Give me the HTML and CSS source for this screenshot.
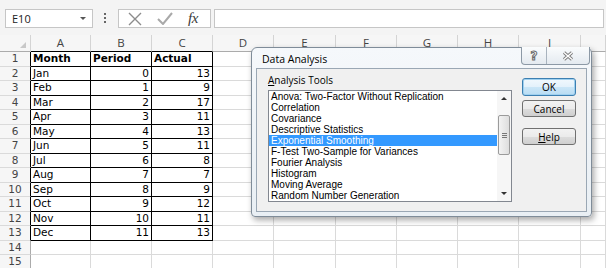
FILE: index.html
```html
<!DOCTYPE html>
<html lang="en">
<head>
    <meta charset="UTF-8">
    <title>Data Analysis</title>
    <link rel="stylesheet" href="styles.css">
</head>
<body>
    <div class="formula-bar">
        <div class="name-box"><span>E10</span><span class="drop"></span></div>
        <div class="dots"><i></i><i></i><i></i></div>
        <div class="fx-box">
            <svg class="ic-cancel" width="14" height="14" viewBox="0 0 14 14"><path d="M1 1L13 13M13 1L1 13"/></svg>
            <svg class="ic-enter" width="16" height="13" viewBox="0 0 16 13"><path d="M1 7L6 12L15 1"/></svg>
            <span class="fx">fx</span>
        </div>
        <div class="formula-input"></div>
    </div>

    <table class="grid">
        <colgroup>
            <col class="w-rh"><col class="w-a"><col><col><col><col class="w-wide"><col><col><col><col class="w-wide"><col class="w-last">
        </colgroup>
        <tr class="hdr">
            <th class="corner"><span class="tri"></span></th>
            <th class="dk">A</th><th class="dk">B</th><th class="dk">C</th><th>D</th><th>E</th><th>F</th><th>G</th><th>H</th><th>I</th><th></th>
        </tr>
        <tr><th class="dk">1</th><td class="t b">Month</td><td class="t b">Period</td><td class="t b">Actual</td><td></td><td></td><td></td><td></td><td></td><td></td><td></td></tr>
        <tr><th class="dk">2</th><td class="t">Jan</td><td class="t n">0</td><td class="t n">13</td><td></td><td></td><td></td><td></td><td></td><td></td><td></td></tr>
        <tr><th class="dk">3</th><td class="t">Feb</td><td class="t n">1</td><td class="t n">9</td><td></td><td></td><td></td><td></td><td></td><td></td><td></td></tr>
        <tr><th class="dk">4</th><td class="t">Mar</td><td class="t n">2</td><td class="t n">17</td><td></td><td></td><td></td><td></td><td></td><td></td><td></td></tr>
        <tr><th class="dk">5</th><td class="t">Apr</td><td class="t n">3</td><td class="t n">11</td><td></td><td></td><td></td><td></td><td></td><td></td><td></td></tr>
        <tr><th class="dk">6</th><td class="t">May</td><td class="t n">4</td><td class="t n">13</td><td></td><td></td><td></td><td></td><td></td><td></td><td></td></tr>
        <tr><th class="dk">7</th><td class="t">Jun</td><td class="t n">5</td><td class="t n">11</td><td></td><td></td><td></td><td></td><td></td><td></td><td></td></tr>
        <tr><th class="dk">8</th><td class="t">Jul</td><td class="t n">6</td><td class="t n">8</td><td></td><td></td><td></td><td></td><td></td><td></td><td></td></tr>
        <tr><th class="dk">9</th><td class="t">Aug</td><td class="t n">7</td><td class="t n">7</td><td></td><td></td><td></td><td></td><td></td><td></td><td></td></tr>
        <tr><th class="dk">10</th><td class="t">Sep</td><td class="t n">8</td><td class="t n">9</td><td></td><td></td><td></td><td></td><td></td><td></td><td></td></tr>
        <tr><th class="dk">11</th><td class="t">Oct</td><td class="t n">9</td><td class="t n">12</td><td></td><td></td><td></td><td></td><td></td><td></td><td></td></tr>
        <tr><th class="dk">12</th><td class="t">Nov</td><td class="t n">10</td><td class="t n">11</td><td></td><td></td><td></td><td></td><td></td><td></td><td></td></tr>
        <tr><th class="dk">13</th><td class="t">Dec</td><td class="t n">11</td><td class="t n">13</td><td></td><td></td><td></td><td></td><td></td><td></td><td></td></tr>
        <tr><th>14</th><td></td><td></td><td></td><td></td><td></td><td></td><td></td><td></td><td></td><td></td></tr>
        <tr><th>15</th><td></td><td></td><td></td><td></td><td></td><td></td><td></td><td></td><td></td><td></td></tr>
    </table>

    <div class="dialog">
        <div class="dlg-title">Data Analysis</div>
        <div class="dlg-caps">
            <span class="cap-help">?</span>
            <span class="cap-close">
                <svg width="12" height="10" viewBox="0 0 12 10"><path class="x-out" d="M2 1.5L10 8.5M10 1.5L2 8.5"/><path class="x-in" d="M2 1.5L10 8.5M10 1.5L2 8.5"/></svg>
            </span>
        </div>
        <div class="dlg-body">
            <div class="tools">
                <div class="label"><u>A</u>nalysis Tools</div>
                <div class="listbox">
                    <ul class="items">
                        <li>Anova: Two-Factor Without Replication</li>
                        <li>Correlation</li>
                        <li>Covariance</li>
                        <li>Descriptive Statistics</li>
                        <li class="sel">Exponential Smoothing</li>
                        <li>F-Test Two-Sample for Variances</li>
                        <li>Fourier Analysis</li>
                        <li>Histogram</li>
                        <li>Moving Average</li>
                        <li>Random Number Generation</li>
                    </ul>
                    <div class="scrollbar">
                        <span class="arrow up"></span>
                        <span class="thumb"><i></i><i></i><i></i></span>
                        <span class="arrow down"></span>
                    </div>
                </div>
            </div>
            <div class="buttons">
                <button class="btn default">OK</button>
                <button class="btn">Cancel</button>
                <button class="btn help"><u>H</u>elp</button>
            </div>
        </div>
    </div>
</body>
</html>
```

FILE: styles.css
```css
body {
    margin: 0;
    width: 606px;
    height: 268px;
    overflow: hidden;
    position: relative;
    background: #fff;
    font-family: "DejaVu Sans", Verdana, sans-serif;
}

/* formula bar */
.formula-bar {
    height: 35px;
    box-sizing: border-box;
    padding: 9px 0 0 5px;
    background: #f4f4f4;
    display: flex;
    align-items: flex-start;
}
.name-box {
    width: 88px;
    height: 19px;
    box-sizing: border-box;
    border: 1px solid #c6c6c6;
    background: #fff;
    display: flex;
    align-items: center;
    justify-content: space-between;
    padding: 0 6px;
    font: 11px "Open Sans", sans-serif;
    color: #222;
}
.drop {
    border-left: 3px solid transparent;
    border-right: 3px solid transparent;
    border-top: 3px solid #555;
}
.dots {
    margin: 4px 0 0 11px;
    display: flex;
    flex-direction: column;
    gap: 2px;
}
.dots i {
    width: 2px;
    height: 2px;
    background: #666;
}
.fx-box {
    margin-left: 12px;
    width: 93px;
    height: 19px;
    box-sizing: border-box;
    border: 1px solid #c6c6c6;
    background: #fff;
    display: flex;
    align-items: center;
    padding-left: 9px;
}
.ic-cancel path {
    stroke: #8c8c8c;
    stroke-width: 1.4;
    fill: none;
}
.ic-enter {
    margin-left: 15px;
}
.ic-enter path {
    stroke: #a9a9a9;
    stroke-width: 2;
    fill: none;
}
.fx {
    margin-left: 15px;
    font: italic 15px "Liberation Serif", serif;
    color: #3a3a3a;
    letter-spacing: -0.5px;
}
.formula-input {
    flex: 1;
    margin: 0 2px 0 3px;
    height: 19px;
    box-sizing: border-box;
    border: 1px solid #c6c6c6;
    background: #fff;
}

/* sheet */
.grid {
    border-collapse: separate;
    border-spacing: 0;
    table-layout: fixed;
    width: 606px;
}
.grid col { width: 61px; }
.grid col.w-rh { width: 31px; }
.grid col.w-a { width: 60px; }
.grid col.w-wide { width: 62px; }
.grid col.w-last { width: 25px; }
.grid td, .grid th {
    box-sizing: border-box;
    padding: 0;
    height: 14.5px;
    line-height: 13px;
    border-right: 1px solid #dadada;
    border-bottom: 1px solid #dadada;
    font-size: 10.5px;
    white-space: nowrap;
    overflow: hidden;
}
.grid th {
    background: #f6f6f6;
    color: #444;
    font-weight: normal;
    text-align: center;
    font-size: 10.5px;
}
.grid tr.hdr th {
    height: 17px;
    border-right-color: #d4d4d4;
    border-bottom-color: #ababab;
    font: 11.5px "Open Sans", sans-serif;
    line-height: 16px;
}
.grid tr.hdr th.dk { border-bottom-color: #000; }
.grid th { border-right-color: #ababab; }
.grid th.dk { border-right-color: #000; }
.grid td { padding: 0 2px; color: #000; }
.grid td.t {
    border-right-color: #000;
    border-bottom-color: #000;
}
.grid td.b { font-weight: bold; }
.grid td.n { text-align: right; }
.corner { position: relative; }
.tri {
    position: absolute;
    right: 4px;
    bottom: 3px;
    border-left: 6px solid transparent;
    border-bottom: 6px solid #c8c8c8;
}

/* dialog */
.dialog {
    position: absolute;
    left: 251px;
    top: 47px;
    width: 341px;
    height: 170px;
    box-sizing: border-box;
    border: 1px solid #7f8c99;
    border-radius: 6px 6px 4px 4px;
    background: linear-gradient(#f5f8fb, #e9eff4);
    box-shadow: 2px 3px 6px rgba(0, 0, 0, 0.35);
    padding: 0 4px 4px;
    display: flex;
    flex-direction: column;
    font: 10px "Open Sans", sans-serif;
    color: #000;
}
.dlg-title {
    height: 20px;
    box-sizing: border-box;
    padding: 4px 0 0 6px;
    font-size: 10.5px;
}
.dlg-caps {
    position: absolute;
    right: 1px;
    top: -1px;
    display: flex;
    height: 17px;
    border: 1px solid #8c99a6;
    border-top: none;
    border-radius: 0 0 4px 4px;
    background: linear-gradient(#fafcfd, #e4eaf0);
}
.dlg-caps span {
    display: flex;
    align-items: center;
    justify-content: center;
}
.cap-help {
    width: 24px;
    border-right: 1px solid #a8b3be;
    font: bold 12px "DejaVu Sans", sans-serif;
    color: #fff;
    -webkit-text-stroke: 1px #6a6a6a;
}
.cap-close { width: 42px; }
.x-out {
    stroke: #7a7a7a;
    stroke-width: 3.2;
    fill: none;
}
.x-in {
    stroke: #fff;
    stroke-width: 1.4;
    fill: none;
}
.dlg-body {
    flex: 1;
    border: 1px solid #9aa7b4;
    background: #f0f0f0;
    display: flex;
    align-items: flex-start;
}
.tools {
    padding: 5px 0 0 11px;
}
.label {
    height: 12px;
    line-height: 12px;
    margin-bottom: 4px;
}
.listbox {
    width: 244px;
    height: 112px;
    box-sizing: border-box;
    border: 1px solid #828790;
    background: #fff;
    display: flex;
}
.items {
    list-style: none;
    margin: 0;
    padding: 0;
    flex: 1;
    font: 10px "Liberation Sans", Arial, sans-serif;
    line-height: 11px;
}
.items li {
    height: 11px;
    padding-left: 2px;
    white-space: nowrap;
}
.items li.sel {
    background: #3399ff;
    color: #fff;
}
.scrollbar {
    width: 14px;
    background: #f6f6f6;
    display: flex;
    flex-direction: column;
    align-items: center;
}
.arrow {
    height: 15px;
    width: 14px;
    display: flex;
    align-items: center;
    justify-content: center;
}
.arrow::before {
    content: "";
    border-left: 3px solid transparent;
    border-right: 3px solid transparent;
}
.arrow.up::before { border-bottom: 3px solid #333; }
.arrow.down { margin-top: auto; }
.arrow.down::before { border-top: 3px solid #333; }
.thumb {
    margin-top: 9px;
    width: 12px;
    height: 40px;
    box-sizing: border-box;
    border: 1px solid #9b9b9b;
    border-radius: 2px;
    background: linear-gradient(90deg, #f3f3f3, #dedede);
    display: flex;
    flex-direction: column;
    align-items: center;
    justify-content: center;
    gap: 1px;
}
.thumb i {
    width: 5px;
    height: 1px;
    background: #777;
}
.buttons {
    margin-left: 10px;
    padding-top: 9px;
    display: flex;
    flex-direction: column;
}
.btn {
    width: 54px;
    height: 17px;
    box-sizing: border-box;
    padding: 0;
    border: 1px solid #707070;
    border-radius: 3px;
    background: linear-gradient(#f2f2f2 0%, #ebebeb 50%, #dddddd 51%, #cfcfcf 100%);
    font: 10px "Open Sans", sans-serif;
    color: #000;
    margin-top: 4px;
}
.btn.default {
    margin-top: 0;
    height: 18px;
    border-color: #3c7fb1;
    background: linear-gradient(#f1f8fd 0%, #e3f1fb 50%, #cbe6f7 51%, #b8dcf3 100%);
    box-shadow: inset 0 0 0 1px #9fd0ef;
}
.btn.help { margin-top: 11px; }
```
